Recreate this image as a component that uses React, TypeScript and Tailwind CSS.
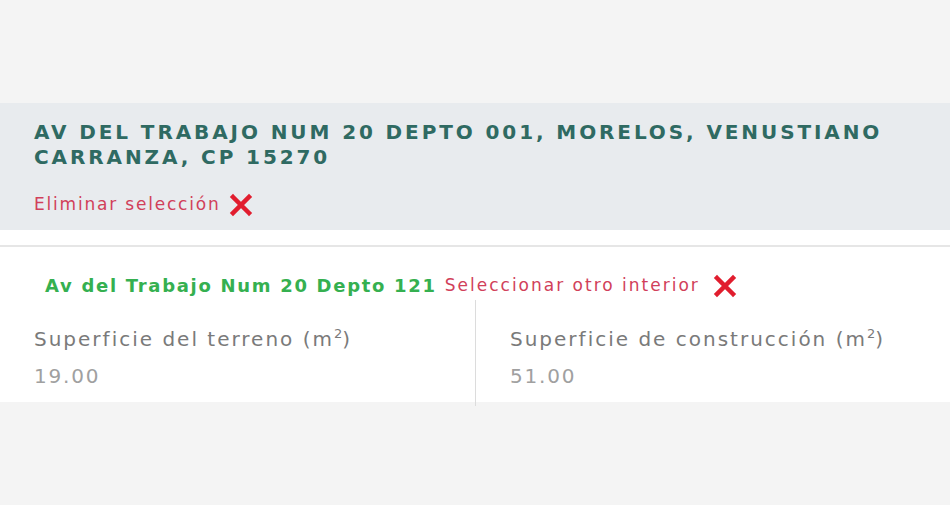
import React from 'react';

const RedX = ({ size = 24 }: { size?: number }) => (
  <svg width={size} height={size} viewBox="0 0 24 24" className="shrink-0">
    <path d="M4 4 L20 20 M20 4 L4 20" stroke="#e11d2e" strokeWidth="4.5" strokeLinecap="square" />
  </svg>
);

const Field = ({ label, value }: { label: string; value: string }) => (
  <div className="flex flex-col">
    <div className="text-[20px] leading-[28px] tracking-[2px] text-[#7a7a7a]">
      {label} (m<span className="relative -top-[8px] text-[13px] tracking-normal">2</span>)
    </div>
    <div className="mt-[6px] text-[20px] leading-[28px] tracking-[1.8px] text-[#a0a0a0]">{value}</div>
  </div>
);

export default function App() {
  return (
    <div
      className="w-[950px] h-[505px] bg-[#f4f4f4] flex flex-col"
      style={{ fontFamily: '"DejaVu Sans", "Open Sans", sans-serif' }}
    >
      <div className="h-[103px] shrink-0" />

      {/* selected address */}
      <div className="h-[127px] bg-[#e8ebee] px-[34px] pt-[17px]">
        <h2 className="text-[20px] leading-[25px] font-semibold uppercase text-[#2f6a62] tracking-[2.9px]">
          AV DEL TRABAJO NUM 20 DEPTO 001, MORELOS, VENUSTIANO CARRANZA, CP 15270
        </h2>
        <div className="mt-[22px] flex items-center gap-[8px]">
          <span className="text-[17px] tracking-[1.8px] text-[#d1405a]">Eliminar selección</span>
          <RedX size={24} />
        </div>
      </div>

      <div className="h-[17px] bg-white border-b-2 border-[#e6e6e6]" />

      {/* interior */}
      <div className="bg-white h-[155px]">
        <div className="flex items-center pl-[45px] pt-[25px]">
          <span className="text-[18px] font-semibold tracking-[1.7px] text-[#35b050]">Av del Trabajo Num 20 Depto 121</span>
          <span className="ml-[8px] text-[17px] tracking-[2px] text-[#d1405a]">Seleccionar otro interior</span>
          <span className="ml-[13px]"><RedX size={24} /></span>
        </div>
        <div className="grid grid-cols-2 mt-[1px] h-[106px]">
          <div className="pl-[34px] pt-[25px]">
            <Field label="Superficie del terreno" value="19.00" />
          </div>
          <div className="border-l border-[#dcdcdc] pl-[34px] pt-[25px]">
            <Field label="Superficie de construcción" value="51.00" />
          </div>
        </div>
      </div>
    </div>
  );
}
